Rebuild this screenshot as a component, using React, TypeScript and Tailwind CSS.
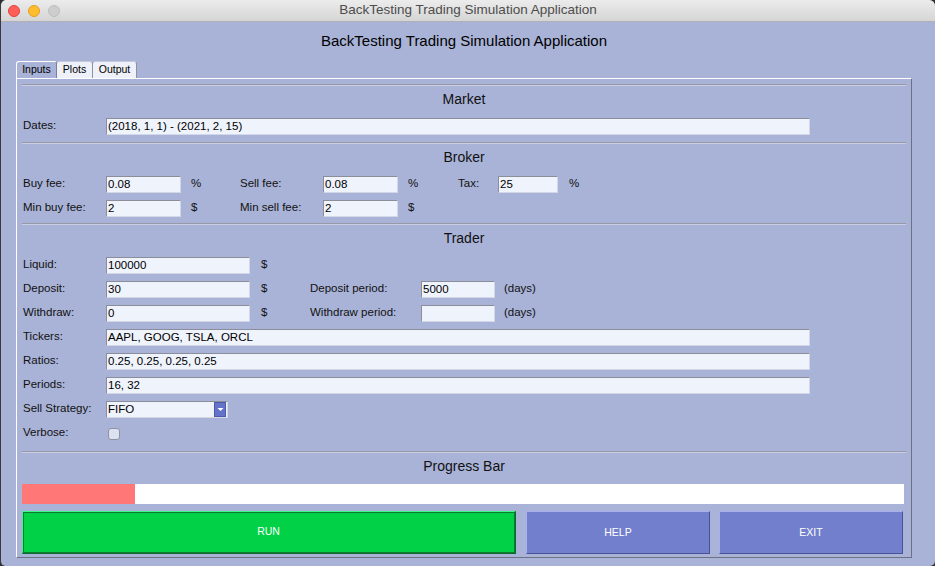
import { ReactNode } from 'react'

const FONT = "font-['Liberation_Sans',Arial,sans-serif]"

function Field({ value = '', w }: { value?: string; w: string }) {
  return (
    <div className={'h-[17px] shrink-0 bg-[#eff3fc] border-t border-l border-[#8b8e98] border-r border-b border-r-[#d3d8e8] border-b-[#d3d8e8] pl-[1px] text-[11.5px] leading-[15px] text-black overflow-hidden whitespace-nowrap ' + w}>
      {value}
    </div>
  )
}

function Label({ children, w }: { children: ReactNode; w: string }) {
  return <div className={'shrink-0 text-[11.5px] leading-[14px] text-[#111] whitespace-nowrap ' + w}>{children}</div>
}

function Sep() {
  return <div className="mx-[5px] h-[2px] border-t border-[#979aa6] border-b border-b-[#c9cee3]" />
}

function Header({ title }: { title: string }) {
  return <div className="h-[32px] pt-[5px] text-center text-[14px] leading-[17px] text-[#111]">{title}</div>
}

function Row({ children }: { children: ReactNode }) {
  return <div className="flex items-start h-[17px]">{children}</div>
}

export default function App() {
  return (
    <div className={'w-[935px] h-[566px] bg-[#2e2e2e] ' + FONT}>
      <div className="w-full h-full flex flex-col rounded-t-[6px] rounded-b-[5px] overflow-hidden bg-[#a9b3d7] border-l border-[#3a3a3a]">
        {/* title bar */}
        <div className="relative h-[22px] shrink-0 bg-gradient-to-b from-[#ececec] to-[#d5d5d5] border-b border-[#b1b1b1] flex items-center">
          <div className="flex gap-[8px] pl-[7px]">
            <span className="w-[12px] h-[12px] rounded-full bg-[#fe5f57] border border-[#e0443e]" />
            <span className="w-[12px] h-[12px] rounded-full bg-[#febc2e] border border-[#dea123]" />
            <span className="w-[12px] h-[12px] rounded-full bg-[#cdcdcd] border border-[#bdbdbd]" />
          </div>
          <div className="absolute inset-0 flex items-center justify-center text-[13.5px] text-[#4d4d4d]">
            BackTesting Trading Simulation Application
          </div>
        </div>

        <div className="flex-1 flex flex-col pl-[15px] pr-[23px]">
          <h1 className="h-[39px] pt-[10px] text-center text-[15px] leading-[18px] text-black">
            BackTesting Trading Simulation Application
          </h1>

          {/* tabs */}
          <div className="flex h-[17px] text-[10.5px] leading-[15px] text-black">
            <div className="w-[41px] text-center rounded-t-[3px] bg-[#a9b3d7] border-t border-l border-white border-r border-r-[#7d8190]">Inputs</div>
            <div className="w-[36px] text-center rounded-t-[3px] bg-[#eef1fa] border-t border-[#c4c9da] border-r border-r-[#8d91a0]">Plots</div>
            <div className="w-[44px] text-center rounded-t-[3px] bg-[#eef1fa] border-t border-[#c4c9da] border-r border-r-[#8d91a0]">Output</div>
          </div>

          {/* panel */}
          <div className="w-[896px] h-[480px] flex flex-col border-t border-l border-white border-r border-b border-r-[#6c7184] border-b-[#6c7184]">
            <div className="h-[5px]" />
            <Sep />
            <Header title="Market" />
            <div className="pl-[6px] pb-[7px]">
              <Row>
                <Label w="w-[83px]">Dates:</Label>
                <Field w="w-[704px]" value="(2018, 1, 1) - (2021, 2, 15)" />
              </Row>
            </div>

            <Sep />
            <Header title="Broker" />
            <div className="pl-[6px] pb-[6px] flex flex-col gap-[7px]">
              <Row>
                <Label w="w-[83px]">Buy fee:</Label>
                <Field w="w-[75px]" value="0.08" />
                <Label w="w-[59px] pl-[10px]">%</Label>
                <Label w="w-[83px]">Sell fee:</Label>
                <Field w="w-[75px]" value="0.08" />
                <Label w="w-[60px] pl-[10px]">%</Label>
                <Label w="w-[40px]">Tax:</Label>
                <Field w="w-[60px]" value="25" />
                <Label w="w-[40px] pl-[11px]">%</Label>
              </Row>
              <Row>
                <Label w="w-[83px]">Min buy fee:</Label>
                <Field w="w-[75px]" value="2" />
                <Label w="w-[59px] pl-[10px]">$</Label>
                <Label w="w-[83px]">Min sell fee:</Label>
                <Field w="w-[75px]" value="2" />
                <Label w="w-[60px] pl-[10px]">$</Label>
              </Row>
            </div>

            <Sep />
            <Header title="Trader" />
            <div className="pl-[6px] pb-[9px] flex flex-col gap-[7px]">
              <Row>
                <Label w="w-[83px]">Liquid:</Label>
                <Field w="w-[144px]" value="100000" />
                <Label w="w-[60px] pl-[11px]">$</Label>
              </Row>
              <Row>
                <Label w="w-[83px]">Deposit:</Label>
                <Field w="w-[144px]" value="30" />
                <Label w="w-[60px] pl-[11px]">$</Label>
                <Label w="w-[111px]">Deposit period:</Label>
                <Field w="w-[74px]" value="5000" />
                <Label w="w-[60px] pl-[9px]">(days)</Label>
              </Row>
              <Row>
                <Label w="w-[83px]">Withdraw:</Label>
                <Field w="w-[144px]" value="0" />
                <Label w="w-[60px] pl-[11px]">$</Label>
                <Label w="w-[111px]">Withdraw period:</Label>
                <Field w="w-[74px]" />
                <Label w="w-[60px] pl-[9px]">(days)</Label>
              </Row>
              <Row>
                <Label w="w-[83px]">Tickers:</Label>
                <Field w="w-[704px]" value="AAPL, GOOG, TSLA, ORCL" />
              </Row>
              <Row>
                <Label w="w-[83px]">Ratios:</Label>
                <Field w="w-[704px]" value="0.25, 0.25, 0.25, 0.25" />
              </Row>
              <Row>
                <Label w="w-[83px]">Periods:</Label>
                <Field w="w-[704px]" value="16, 32" />
              </Row>
              <Row>
                <Label w="w-[83px]">Sell Strategy:</Label>
                <div className="w-[122px] h-[17px] flex bg-[#eff3fc] border-t border-l border-[#8b8e98] border-r border-b border-r-[#d3d8e8] border-b-[#d3d8e8]">
                  <div className="flex-1 pl-[1px] text-[11.5px] leading-[15px] text-black">FIFO</div>
                  <div className="w-[12px] h-[15px] bg-[#6472ca] border border-[#4d5aa8] flex items-center justify-center mr-[1px]">
                    <svg width="7" height="5" viewBox="0 0 7 5"><path d="M0.5 1 L3.5 4 L6.5 1 Z" fill="#ffffff" /></svg>
                  </div>
                </div>
              </Row>
              <Row>
                <Label w="w-[85px]">Verbose:</Label>
                <div className="mt-[3px] w-[12px] h-[12px] rounded-[3px] bg-[#dde2f0] border border-[#8d92a6]" />
              </Row>
            </div>

            <Sep />
            <div className="h-[31px] pt-[5px] text-center text-[14px] leading-[17px] text-[#111]">Progress Bar</div>
            <div className="ml-[5px] w-[882px] h-[20px] bg-white flex">
              <div className="w-[113px] h-full bg-[#ff7777]" />
            </div>
            <div className="flex mt-[7px] ml-[5px] h-[43px] text-[10.5px] text-white">
              <div className="w-[494px] flex items-center justify-center bg-[#00d146] border-t border-l border-[#3ef58a] border-r-2 border-b-2 border-r-[#0c6a2d] border-b-[#0c6a2d] outline outline-1 -outline-offset-2 outline-[#0f7a33]">RUN</div>
              <div className="w-[184px] ml-[10px] flex items-center justify-center bg-[#727fcc] border-t border-l border-[#a8b1ee] border-r border-b border-r-[#4a5296] border-b-[#4a5296]">HELP</div>
              <div className="w-[184px] ml-[9px] flex items-center justify-center bg-[#727fcc] border-t border-l border-[#a8b1ee] border-r border-b border-r-[#4a5296] border-b-[#4a5296]">EXIT</div>
            </div>
          </div>
        </div>
      </div>
    </div>
  )
}
